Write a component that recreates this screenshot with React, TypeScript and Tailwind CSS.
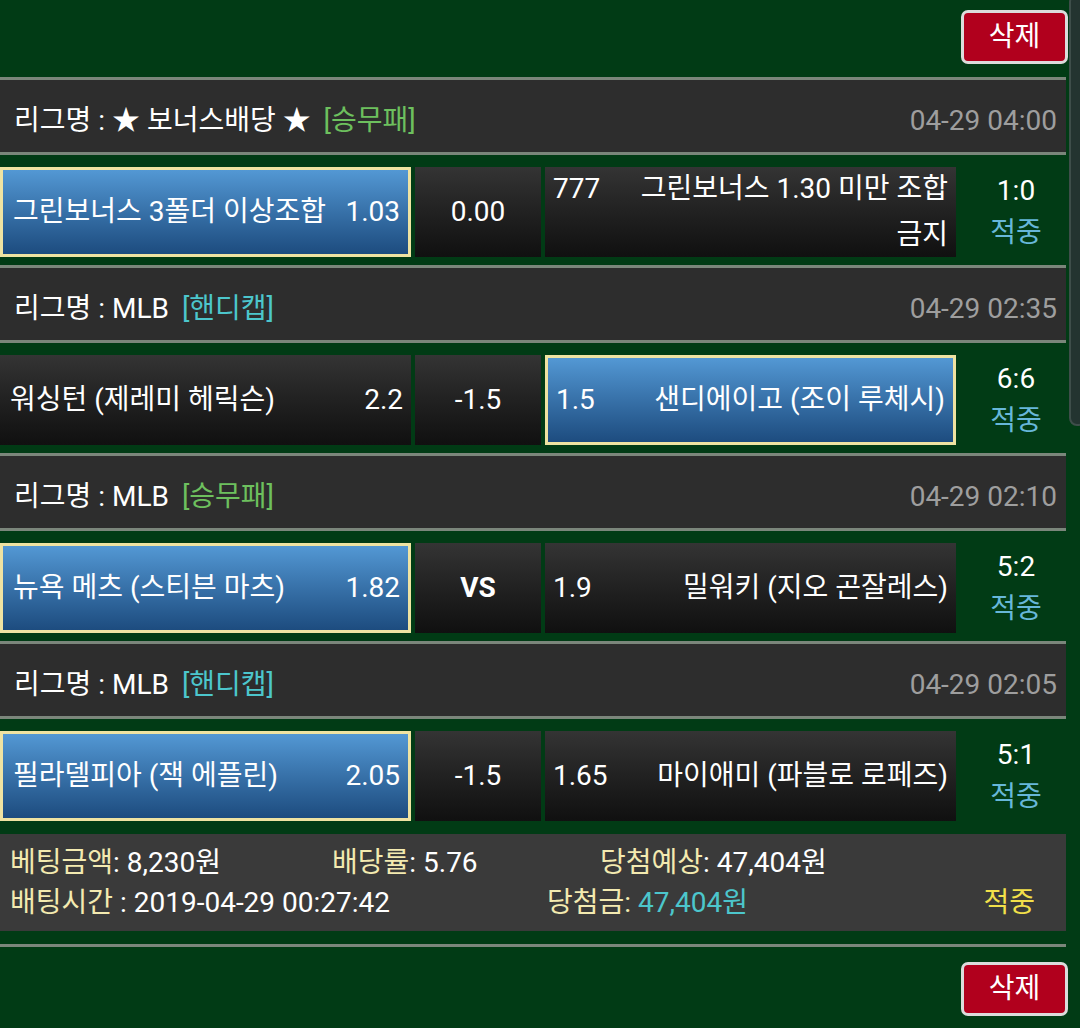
import React from "react";

type Side = { name: string; odds: string; picked?: boolean };
type Game = {
  league: string;
  kind: "승무패" | "핸디캡";
  date: string;
  home: Side;
  mid: string;
  away: Side;
  score: string;
  result: string;
};

const GAMES: Game[] = [
  {
    league: "★ 보너스배당 ★",
    kind: "승무패",
    date: "04-29 04:00",
    home: { name: "그린보너스 3폴더 이상조합", odds: "1.03", picked: true },
    mid: "0.00",
    away: { name: "그린보너스 1.30 미만 조합 금지", odds: "777" },
    score: "1:0",
    result: "적중",
  },
  {
    league: "MLB",
    kind: "핸디캡",
    date: "04-29 02:35",
    home: { name: "워싱턴 (제레미 헤릭슨)", odds: "2.2" },
    mid: "-1.5",
    away: { name: "샌디에이고 (조이 루체시)", odds: "1.5", picked: true },
    score: "6:6",
    result: "적중",
  },
  {
    league: "MLB",
    kind: "승무패",
    date: "04-29 02:10",
    home: { name: "뉴욕 메츠 (스티븐 마츠)", odds: "1.82", picked: true },
    mid: "VS",
    away: { name: "밀워키 (지오 곤잘레스)", odds: "1.9" },
    score: "5:2",
    result: "적중",
  },
  {
    league: "MLB",
    kind: "핸디캡",
    date: "04-29 02:05",
    home: { name: "필라델피아 (잭 에플린)", odds: "2.05", picked: true },
    mid: "-1.5",
    away: { name: "마이애미 (파블로 로페즈)", odds: "1.65" },
    score: "5:1",
    result: "적중",
  },
];

const blue = "bg-gradient-to-b from-[#5398d4] to-[#1d4c7f] border-[3px] border-[#efe3a2]";
const dark = "bg-gradient-to-b from-[#343434] to-[#101010]";

function DeleteButton() {
  return (
    <button className="w-[107px] h-[54px] rounded-[7px] border-[3px] border-[#dcdcdc] bg-[#b1001d] text-white text-[28px] leading-none">
      삭제
    </button>
  );
}

function GameBlock({ g }: { g: Game }) {
  return (
    <div className="w-[1066px]">
      {/* league header */}
      <div className="h-[78px] border-y-[3px] border-[#7b867b] bg-[#2d2d2d] flex items-center justify-between pl-[14px] pr-[9px] pt-[10px]">
        <div className="text-white">
          리그명 : {g.league}{" "}
          <span className={g.kind === "승무패" ? "text-[#6dc05e] ml-[6px]" : "text-[#4cc6cc] ml-[6px]"}>
            [{g.kind}]
          </span>
        </div>
        <div className="text-[#9e9e9e]">{g.date}</div>
      </div>

      {/* bet row */}
      <div className="flex gap-[4px] pt-[12px] pb-[8px]">
        <div className={`w-[411px] h-[90px] flex items-center justify-between pl-[10px] pr-[8px] text-white ${g.home.picked ? blue : dark}`}>
          <span>{g.home.name}</span>
          <span>{g.home.odds}</span>
        </div>
        <div className={`w-[126px] h-[90px] flex items-center justify-center text-white ${dark} ${g.mid === "VS" ? "font-bold" : ""}`}>
          {g.mid}
        </div>
        <div className={`w-[411px] h-[90px] flex items-center pl-[8px] pr-[8px] text-white ${g.away.picked ? blue : dark}`}>
          <div className="w-full flex items-start gap-[30px] leading-[46px]">
            <span className="shrink-0">{g.away.odds}</span>
            <div className="flex-1 text-right">{g.away.name}</div>
          </div>
        </div>
        <div className="flex-1 h-[90px] flex flex-col items-center justify-center pl-[6px] leading-[42px]">
          <span className="text-white">{g.score}</span>
          <span className="text-[#67b7d9]">{g.result}</span>
        </div>
      </div>
    </div>
  );
}

export default function App() {
  return (
    <div
      className="relative min-h-screen bg-[#013b15] text-[28px] overflow-hidden"
      style={{ fontFamily: "Roboto, 'Noto Sans CJK KR', 'Noto Sans', sans-serif" }}
    >
      {/* overlay scrollbar */}
      <div className="absolute right-[-6px] top-[-6px] w-[17px] h-[432px] rounded-[8px] bg-[#233430] border-2 border-[#3e4e4a]" />

      <div className="h-[77px] flex justify-end items-start pt-[10px] pr-[12px]">
        <DeleteButton />
      </div>

      {GAMES.map((g, i) => (
        <GameBlock key={i} g={g} />
      ))}

      {/* summary */}
      <div className="w-[1066px] mt-[5px] h-[97px] bg-[#3a3a3a] pl-[10px] flex flex-col justify-center leading-[40px] whitespace-nowrap">
        <div className="flex">
          <div className="w-[322px]">
            <span className="text-[#f3eab0]">베팅금액</span>
            <span className="text-white">: 8,230원</span>
          </div>
          <div className="w-[268px]">
            <span className="text-[#f3eab0]">배당률</span>
            <span className="text-white">: 5.76</span>
          </div>
          <div>
            <span className="text-[#f3eab0]">당첨예상</span>
            <span className="text-white">: 47,404원</span>
          </div>
        </div>
        <div className="flex">
          <div className="w-[537px]">
            <span className="text-[#f3eab0]">배팅시간</span>
            <span className="text-white"> : 2019-04-29 00:27:42</span>
          </div>
          <div className="flex-1">
            <span className="text-[#f3eab0]">당첨금: </span>
            <span className="text-[#4cc6cc]">47,404원</span>
          </div>
          <div className="mr-[31px] text-[#f2e04a]">적중</div>
        </div>
      </div>

      <div className="w-[1066px] mt-[13px] border-t-[3px] border-[#7b867b]" />

      <div className="flex justify-end pt-[15px] pr-[12px] pb-[20px]">
        <DeleteButton />
      </div>
    </div>
  );
}
